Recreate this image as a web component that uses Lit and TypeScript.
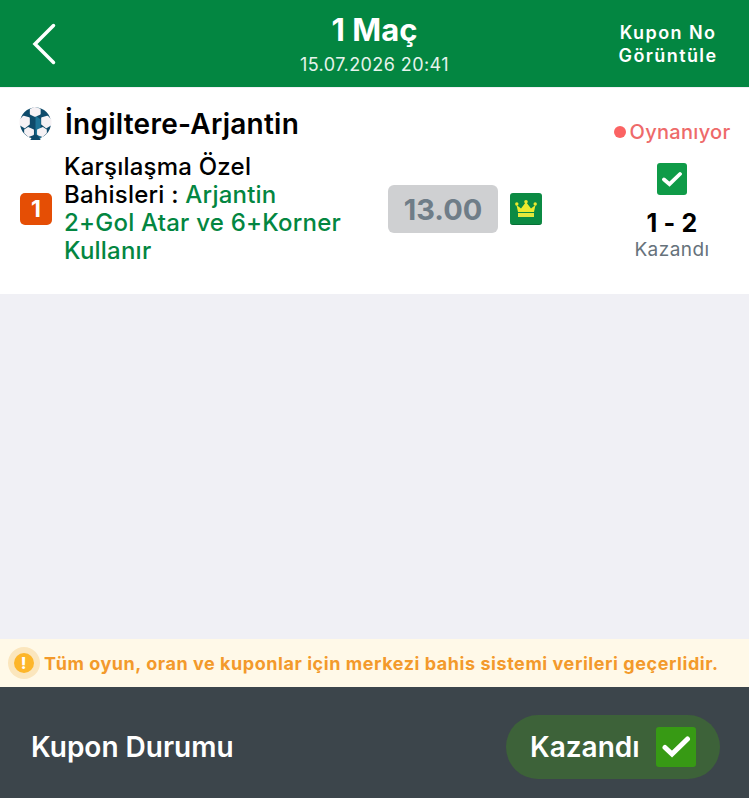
import { LitElement, html, css } from "lit";
import { customElement } from "lit/decorators.js";

@customElement("app-root")
export class AppRoot extends LitElement {
  static styles = css`
    :host { display: block; width: 749px; height: 798px; font-family: Inter, "Noto Sans", sans-serif; color: #000; overflow: hidden; }
    .page { display: flex; flex-direction: column; height: 798px; background: #f0f0f5; }
    .head { height: 87px; flex: none; background: #038641; color: #fff; display: grid; grid-template-columns: 162px 1fr 162px; box-sizing: border-box; margin-bottom: 1px; }
    .back { display: flex; align-items: center; padding: 0 0 0 32px; }
    .back svg { display: block; }
    .title { text-align: center; padding-top: 11px; }
    .title b { display: block; font-size: 31px; line-height: 38px; font-weight: 700; }
    .title span { display: block; font-size: 18px; line-height: 24px; letter-spacing: .42px; margin-top: 4px; color: #e6f3ec; }
    .kno { text-align: center; font-size: 18px; line-height: 23px; font-weight: 600; letter-spacing: 1.4px; padding-top: 21px; }
    .card { height: 206px; flex: none; background: #fff; display: grid; grid-template-columns: 388px 207px 1fr; box-sizing: border-box; position: relative; }
    .left { padding: 19px 0 0 19px; }
    .match { display: flex; align-items: center; gap: 13px; height: 34px; font-size: 28px; font-weight: 600; letter-spacing: .25px; }
    .match svg { margin-bottom: 2px; flex: none; }
    .betrow { display: flex; align-items: center; margin-top: 12px; padding-left: 1px; }
    .one { width: 32px; height: 32px; flex: none; border-radius: 5px; background: #e54e05; color: #fff; font-size: 23px; font-weight: 700; display: flex; align-items: center; justify-content: center; margin-right: 12px; }
    .bet { font-size: 24px; line-height: 28px; font-weight: 500; width: 285px; letter-spacing: .22px; }
    .bet em { font-style: normal; color: #038641; }
    .mid { display: flex; align-items: center; gap: 12px; padding-top: 36px; height: 206px; box-sizing: border-box; }
    .odd { width: 110px; height: 48px; flex: none; border-radius: 6px; background: #cfd0d2; color: #6f7d88; font-size: 29px; font-weight: 700; display: flex; align-items: center; justify-content: center; }
    .crown { width: 32px; height: 32px; box-sizing: border-box; border-radius: 3px; background: #0b8a43; border-bottom: 1px solid #076f36; display: flex; align-items: center; justify-content: center; flex: none; }
    .right { display: flex; flex-direction: column; align-items: center; padding: 32px 0 0 0; position: relative; }
    .live { display: flex; align-items: center; gap: 4px; font-size: 20px; line-height: 24px; color: #ee6a6a; font-weight: 500; letter-spacing: .3px; }
    .dot { width: 12px; height: 12px; border-radius: 50%; background: #fb6363; }
    .chk { width: 30px; height: 32px; border-radius: 3px; background: #0f9b48; display: flex; align-items: center; justify-content: center; margin-top: 19px; }
    .score { font-size: 25px; line-height: 30px; font-weight: 700; margin-top: 13px; letter-spacing: .2px; }
    .res { font-size: 19px; line-height: 24px; color: #66727b; letter-spacing: .45px; }
    .space { flex: 1; }
    .note { height: 48px; flex: none; background: #fff9e8; display: flex; align-items: center; gap: 4px; padding-left: 8px; box-sizing: border-box; color: #f39a2b; font-size: 18px; font-weight: 700; letter-spacing: .55px; white-space: nowrap; }
    .warn { width: 32px; height: 32px; flex: none; border-radius: 50%; background: #fbe6bd; display: flex; align-items: center; justify-content: center; }
    .warn i { width: 20px; height: 20px; border-radius: 50%; background: #fdb62a; color: #fff; font-style: normal; font-size: 16px; font-weight: 800; line-height: 20px; text-align: center; }
    .foot { height: 111px; flex: none; background: #3c454b; color: #fff; display: flex; align-items: center; justify-content: space-between; padding: 0 29px 0 31px; font-size: 28px; font-weight: 600; box-sizing: border-box; }
    .pill { width: 214px; height: 64px; border-radius: 32px; background: #3d6239; display: flex; align-items: center; box-sizing: border-box; padding-left: 24px; gap: 16px; margin-top: 9px; }
    .foot .lbl { margin-top: 9px; }
    .big { width: 40px; height: 40px; border-radius: 3px; background: #379a14; display: flex; align-items: center; justify-content: center; flex: none; }
  `;

  render() {
    return html`<div class="page">
      <div class="head">
        <div class="back"><svg width="24" height="42" viewBox="0 0 24 42"><path d="M21.500 2.500 L3 21 L21.500 39.500" fill="none" stroke="#fff" stroke-width="3.500" stroke-linecap="round"/></svg></div>
        <div class="title"><b>1 Maç</b><span>15.07.2026 20:41</span></div>
        <div class="kno">Kupon No<br />Görüntüle</div>
      </div>
      <div class="card">
        <div class="left">
          <div class="match">
            <svg width="33" height="33" viewBox="0 0 32 32">
              <circle cx="16" cy="15.500" r="15" fill="#0e4a6a"/>
              <path d="M16 8 21 12 21 30.500 16 30.500Z" fill="#1d7396"/>
              <path d="M11 32 21 32 18 27 14 27Z" fill="#0e4a6a"/>
              <g fill="#f6f2f5" stroke="#f6f2f5" stroke-width="2" stroke-linejoin="round">
                <path d="M15 1 20 2.500 20 6.500 15.500 8.500 11.500 6.500 11.500 2.500Z"/>
                <path d="M4.500 9.500 9.500 11 9.500 16.500 5.500 19.500 1.500 17 1.500 12.500Z"/>
                <path d="M27.500 9.500 22.500 11 22.500 16.500 26.500 19.500 30.500 17 30.500 12.500Z"/>
                <path d="M9 20.500 13.500 22.500 13.500 26.500 9.500 28 6 25 6 22.500Z"/>
                <path d="M23 20.500 18.500 22.500 18.500 26.500 22.500 28 26 25 26 22.500Z"/>
              </g>
            </svg>
            <span>İngiltere-Arjantin</span>
          </div>
          <div class="betrow">
            <div class="one">1</div>
            <div class="bet">Karşılaşma Özel Bahisleri : <em>Arjantin 2+Gol Atar ve 6+Korner Kullanır</em></div>
          </div>
        </div>
        <div class="mid">
          <div class="odd">13.00</div>
          <div class="crown"><svg width="22" height="17" viewBox="0 0 22 17"><path d="M1.500 5 6 8.500 11 2 16 8.500 20.500 5 19 12 3 12Z" fill="#ecea2e"/><circle cx="1.800" cy="4" r="1.700" fill="#ecea2e"/><circle cx="11" cy="1.800" r="1.800" fill="#ecea2e"/><circle cx="20.200" cy="4" r="1.700" fill="#ecea2e"/><rect x="3" y="13" width="16" height="4" fill="#e4e83c"/></svg></div>
        </div>
        <div class="right">
          <div class="live"><span class="dot"></span>Oynanıyor</div>
          <div class="chk"><svg width="20" height="16" viewBox="0 0 20 16"><path d="M2 8.500 7.500 13.200 18 3" fill="none" stroke="#fff" stroke-width="3.800" stroke-linecap="round"/></svg></div>
          <div class="score">1 - 2</div>
          <div class="res">Kazandı</div>
        </div>
      </div>
      <div class="space"></div>
      <div class="note"><span class="warn"><i>!</i></span><span>Tüm oyun, oran ve kuponlar için merkezi bahis sistemi verileri geçerlidir.</span></div>
      <div class="foot">
        <span class="lbl">Kupon Durumu</span>
        <div class="pill"><span>Kazandı</span><div class="big"><svg width="30" height="24" viewBox="0 0 30 24"><path d="M4 12.500 11 19 26.500 4" fill="none" stroke="#fff" stroke-width="5" stroke-linecap="round"/></svg></div></div>
      </div>
    </div>`;
  }
}
